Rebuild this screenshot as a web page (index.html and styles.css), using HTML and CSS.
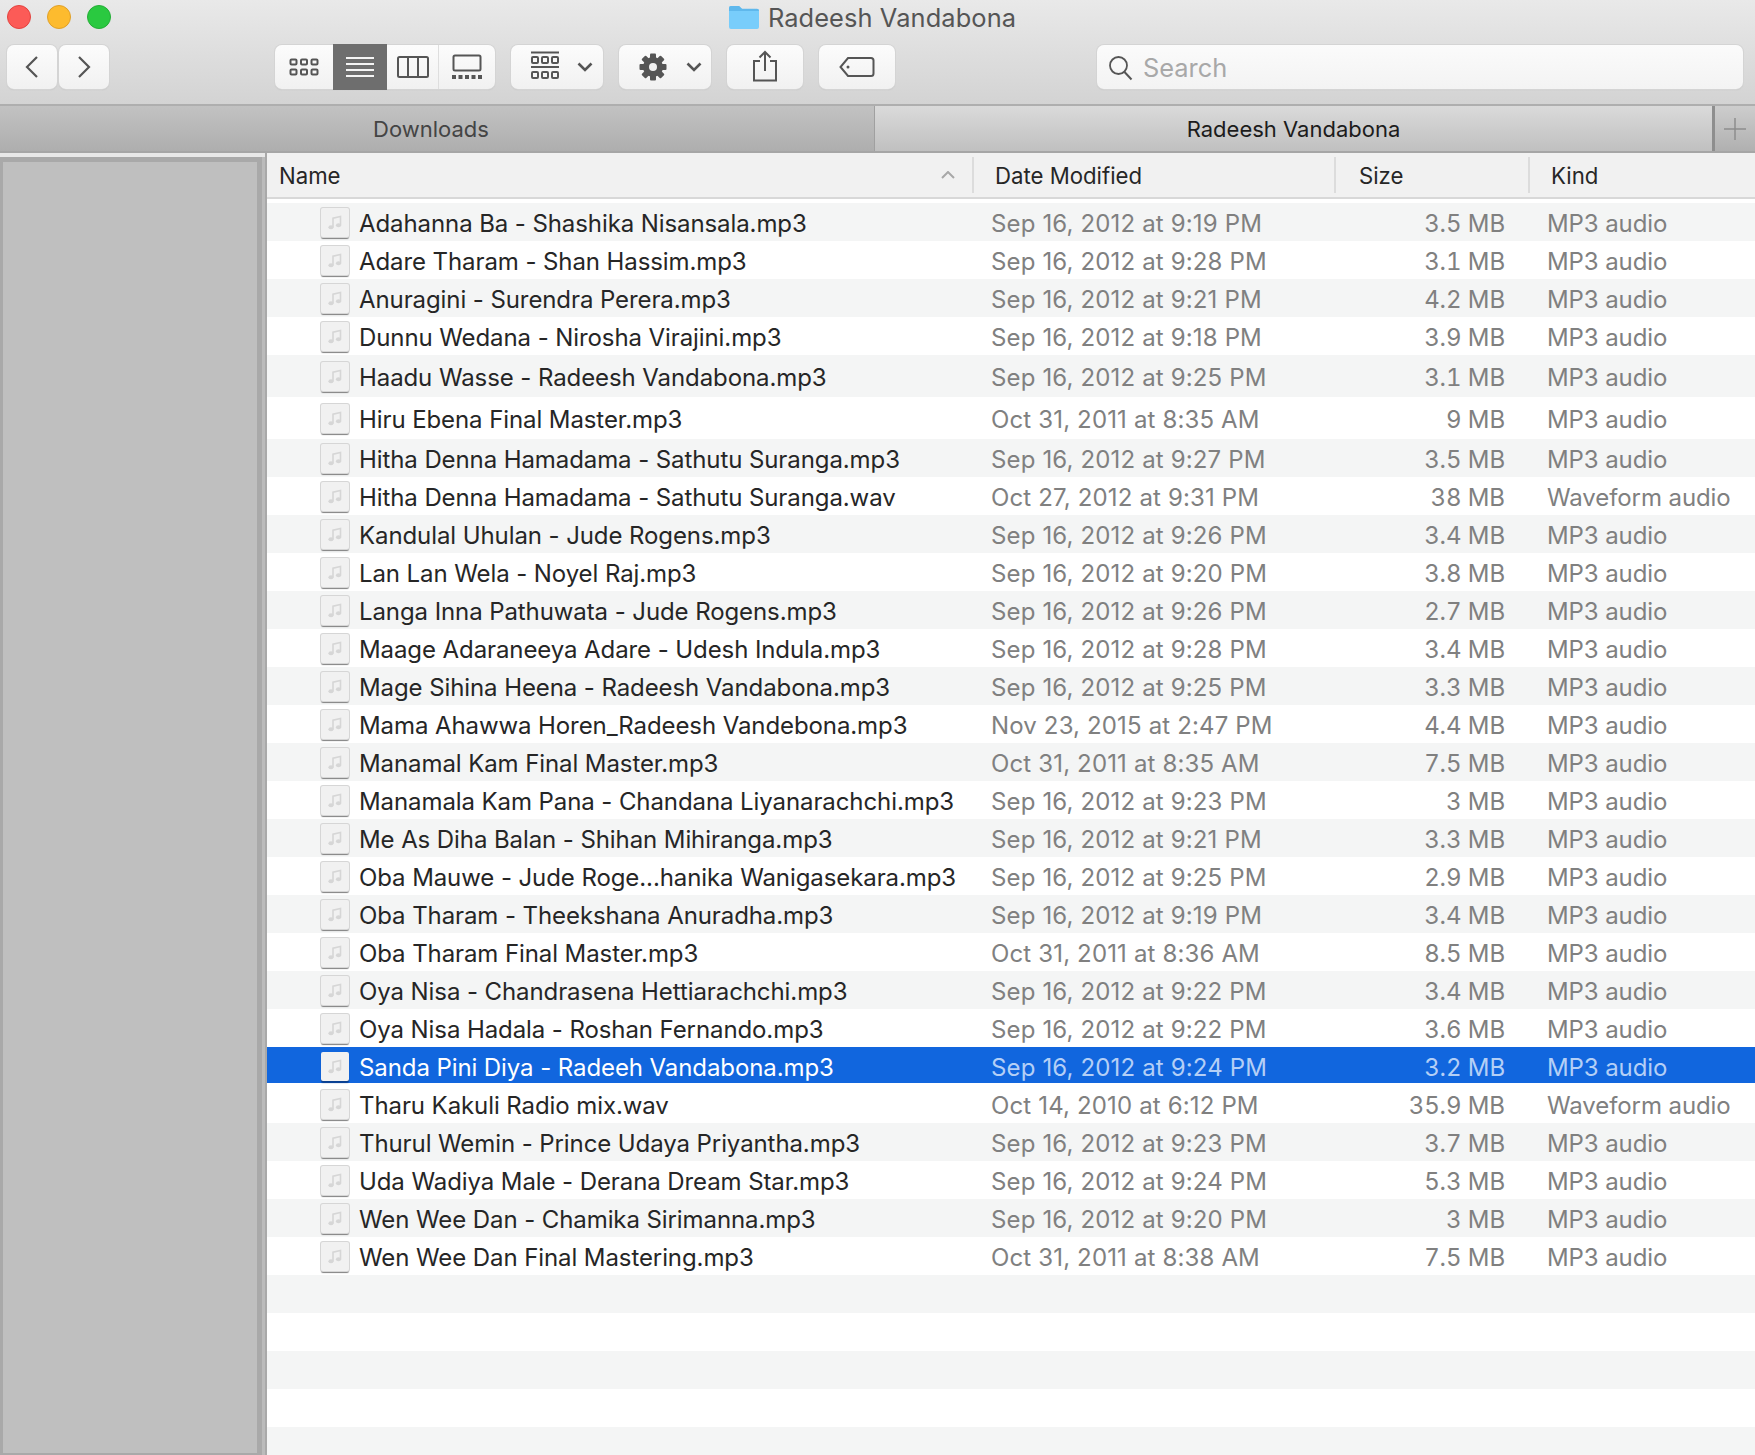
FILE: index.html
```html
<!DOCTYPE html>
<html lang="en">
<head>
<meta charset="utf-8">
<title>Radeesh Vandabona</title>
<link rel="stylesheet" href="styles.css">
</head>
<body>
<svg class="defs" width="0" height="0">
  <symbol id="note" viewBox="0 0 28 28">
    <path d="M12 18.5V9.6l7.5-1.6v8.4" fill="none" stroke="#d6d6d6" stroke-width="1.6"/>
    <ellipse cx="10" cy="18.7" rx="2.6" ry="2" fill="#d6d6d6"/>
    <ellipse cx="17.5" cy="16.8" rx="2.6" ry="2" fill="#d6d6d6"/>
  </symbol>
</svg>
<div class="window">
  <header class="toolbar">
    <div class="titlebar">
      <div class="lights">
        <span class="light red"></span>
        <span class="light yellow"></span>
        <span class="light green"></span>
      </div>
      <div class="title">
        <svg class="folder" viewBox="0 0 30 24" width="30" height="24"><path d="M0 3a2 2 0 0 1 2-2h8l3 3h15a2 2 0 0 1 2 2v16a2 2 0 0 1-2 2H2a2 2 0 0 1-2-2z" fill="#78cdfb"/><path d="M0 6h30v-.2a2 2 0 0 0-2-2H13L10 1H2a2 2 0 0 0-2 2z" fill="#5fb8ec"/></svg>
        <span>Radeesh Vandabona</span>
      </div>
    </div>
    <div class="tools">
      <div class="nav">
        <button class="btn nav-btn"><svg viewBox="0 0 20 30" width="20" height="30"><path d="M15 5L5 15l10 10" class="ic"/></svg></button>
        <button class="btn nav-btn"><svg viewBox="0 0 20 30" width="20" height="30"><path d="M5 5l10 10L5 25" class="ic"/></svg></button>
      </div>
      <div class="btn views">
        <span class="view v-icon"><svg viewBox="0 0 30 24" width="30" height="24"><g class="ico"><rect x="1.5" y="4.5" width="6" height="5" rx="1"/><rect x="12" y="4.5" width="6" height="5" rx="1"/><rect x="22.500" y="4.500" width="6" height="5" rx="1"/><rect x="1.500" y="14.500" width="6" height="5" rx="1"/><rect x="12" y="14.500" width="6" height="5" rx="1"/><rect x="22.500" y="14.500" width="6" height="5" rx="1"/></g></svg></span>
        <span class="view v-list"><svg viewBox="0 0 30 24" width="30" height="24"><path d="M1 3h28M1 9h28M1 15h28M1 21h28" stroke="#f4f4f4" stroke-width="2"/></svg></span>
        <span class="view v-col"><svg viewBox="0 0 32 24" width="32" height="24"><g class="ico"><rect x="1" y="2" width="30" height="20" rx="1.500"/><path d="M11 2v20M21 2v20"/></g></svg></span>
        <span class="view v-gal"><svg viewBox="0 0 30 26" width="30" height="26"><g class="ico"><rect x="1.500" y="1.500" width="27" height="15" rx="1.500"/></g><path d="M0 23h30" stroke="#555" stroke-width="4" stroke-dasharray="4 2.500"/></svg></span>
      </div>
      <button class="btn arrange"><svg viewBox="0 0 30 32" width="30" height="32"><path d="M0 1.500h28M0 16h28" stroke="#555" stroke-width="2"/><g class="ico"><rect x="1" y="6" width="6" height="6" rx="1"/><rect x="11" y="6" width="6" height="6" rx="1"/><rect x="21" y="6" width="6" height="6" rx="1"/><rect x="1" y="21" width="6" height="6" rx="1"/><rect x="11" y="21" width="6" height="6" rx="1"/><rect x="21" y="21" width="6" height="6" rx="1"/></g></svg><svg class="chev" viewBox="0 0 16 10" width="16" height="10"><path d="M1.500 1.500L8 8l6.500-6.500" class="ic2"/></svg></button>
      <button class="btn action"><svg viewBox="0 0 28 28" width="28" height="28"><g fill="#555"><circle cx="14" cy="14" r="10"/><rect x="11" y="0.500" width="6" height="27" rx="1"/><rect x="11" y="0.500" width="6" height="27" rx="1" transform="rotate(45 14 14)"/><rect x="11" y="0.500" width="6" height="27" rx="1" transform="rotate(90 14 14)"/><rect x="11" y="0.500" width="6" height="27" rx="1" transform="rotate(135 14 14)"/></g><circle cx="14" cy="14" r="4" fill="#f2f2f2"/></svg><svg class="chev" viewBox="0 0 16 10" width="16" height="10"><path d="M1.500 1.500L8 8l6.500-6.500" class="ic2"/></svg></button>
      <button class="btn share"><svg viewBox="0 0 26 32" width="26" height="32"><path d="M8 11H2v19.500h22V11h-6" class="ic3"/><path d="M13 21V2M7.500 7.500L13 2l5.500 5.500" class="ic3"/></svg></button>
      <button class="btn tag"><svg viewBox="0 0 36 22" width="36" height="22"><path d="M9 2h23a2.500 2.500 0 0 1 2.500 2.500v13a2.500 2.500 0 0 1-2.500 2.500H9L1.500 11z" class="ic3"/><circle cx="9" cy="11" r="1.500" fill="#555"/></svg></button>
      <div class="search">
        <svg viewBox="0 0 28 28" width="28" height="28"><circle cx="11.500" cy="11.500" r="8.500" fill="none" stroke="#555" stroke-width="1.800"/><path d="M17.500 18l7 7.500" stroke="#555" stroke-width="2" fill="none"/></svg>
        <span>Search</span>
      </div>
    </div>
  </header>
  <nav class="tabs">
    <div class="tab inactive">Downloads</div>
    <div class="tab active">Radeesh Vandabona</div>
    <div class="tab-add"><svg viewBox="0 0 24 24" width="24" height="24"><path d="M12 1v22M1 12h22" stroke="#8d8d8d" stroke-width="1.500"/></svg></div>
  </nav>
  <main class="content">
    <aside class="sidebar"><div class="side-fill"></div></aside>
    <section class="list">
      <div class="head">
        <div class="hcell c-name">Name<svg viewBox="0 0 14 8" width="14" height="8"><path d="M1 7l6-6 6 6" fill="none" stroke="#a8a8a8" stroke-width="2"/></svg></div>
        <div class="hcell c-date">Date Modified</div>
        <div class="hcell c-size">Size</div>
        <div class="hcell c-kind">Kind</div>
      </div>
      <div class="rows">
        <div class="row"><div class="name"><svg class="file"><use href="#note"/></svg>Adahanna Ba - Shashika Nisansala.mp3</div><div class="date">Sep 16, 2012 at 9:19 PM</div><div class="size">3.5 MB</div><div class="kind">MP3 audio</div></div>
        <div class="row"><div class="name"><svg class="file"><use href="#note"/></svg>Adare Tharam - Shan Hassim.mp3</div><div class="date">Sep 16, 2012 at 9:28 PM</div><div class="size">3.1 MB</div><div class="kind">MP3 audio</div></div>
        <div class="row"><div class="name"><svg class="file"><use href="#note"/></svg>Anuragini - Surendra Perera.mp3</div><div class="date">Sep 16, 2012 at 9:21 PM</div><div class="size">4.2 MB</div><div class="kind">MP3 audio</div></div>
        <div class="row"><div class="name"><svg class="file"><use href="#note"/></svg>Dunnu Wedana - Nirosha Virajini.mp3</div><div class="date">Sep 16, 2012 at 9:18 PM</div><div class="size">3.9 MB</div><div class="kind">MP3 audio</div></div>
        <div class="row tall"><div class="name"><svg class="file"><use href="#note"/></svg>Haadu Wasse - Radeesh Vandabona.mp3</div><div class="date">Sep 16, 2012 at 9:25 PM</div><div class="size">3.1 MB</div><div class="kind">MP3 audio</div></div>
        <div class="row tall"><div class="name"><svg class="file"><use href="#note"/></svg>Hiru Ebena Final Master.mp3</div><div class="date">Oct 31, 2011 at 8:35 AM</div><div class="size">9 MB</div><div class="kind">MP3 audio</div></div>
        <div class="row"><div class="name"><svg class="file"><use href="#note"/></svg>Hitha Denna Hamadama - Sathutu Suranga.mp3</div><div class="date">Sep 16, 2012 at 9:27 PM</div><div class="size">3.5 MB</div><div class="kind">MP3 audio</div></div>
        <div class="row"><div class="name"><svg class="file"><use href="#note"/></svg>Hitha Denna Hamadama - Sathutu Suranga.wav</div><div class="date">Oct 27, 2012 at 9:31 PM</div><div class="size">38 MB</div><div class="kind">Waveform audio</div></div>
        <div class="row"><div class="name"><svg class="file"><use href="#note"/></svg>Kandulal Uhulan - Jude Rogens.mp3</div><div class="date">Sep 16, 2012 at 9:26 PM</div><div class="size">3.4 MB</div><div class="kind">MP3 audio</div></div>
        <div class="row"><div class="name"><svg class="file"><use href="#note"/></svg>Lan Lan Wela - Noyel Raj.mp3</div><div class="date">Sep 16, 2012 at 9:20 PM</div><div class="size">3.8 MB</div><div class="kind">MP3 audio</div></div>
        <div class="row"><div class="name"><svg class="file"><use href="#note"/></svg>Langa Inna Pathuwata - Jude Rogens.mp3</div><div class="date">Sep 16, 2012 at 9:26 PM</div><div class="size">2.7 MB</div><div class="kind">MP3 audio</div></div>
        <div class="row"><div class="name"><svg class="file"><use href="#note"/></svg>Maage Adaraneeya Adare - Udesh Indula.mp3</div><div class="date">Sep 16, 2012 at 9:28 PM</div><div class="size">3.4 MB</div><div class="kind">MP3 audio</div></div>
        <div class="row"><div class="name"><svg class="file"><use href="#note"/></svg>Mage Sihina Heena - Radeesh Vandabona.mp3</div><div class="date">Sep 16, 2012 at 9:25 PM</div><div class="size">3.3 MB</div><div class="kind">MP3 audio</div></div>
        <div class="row"><div class="name"><svg class="file"><use href="#note"/></svg>Mama Ahawwa Horen_Radeesh Vandebona.mp3</div><div class="date">Nov 23, 2015 at 2:47 PM</div><div class="size">4.4 MB</div><div class="kind">MP3 audio</div></div>
        <div class="row"><div class="name"><svg class="file"><use href="#note"/></svg>Manamal Kam Final Master.mp3</div><div class="date">Oct 31, 2011 at 8:35 AM</div><div class="size">7.5 MB</div><div class="kind">MP3 audio</div></div>
        <div class="row"><div class="name"><svg class="file"><use href="#note"/></svg>Manamala Kam Pana - Chandana Liyanarachchi.mp3</div><div class="date">Sep 16, 2012 at 9:23 PM</div><div class="size">3 MB</div><div class="kind">MP3 audio</div></div>
        <div class="row"><div class="name"><svg class="file"><use href="#note"/></svg>Me As Diha Balan - Shihan Mihiranga.mp3</div><div class="date">Sep 16, 2012 at 9:21 PM</div><div class="size">3.3 MB</div><div class="kind">MP3 audio</div></div>
        <div class="row"><div class="name"><svg class="file"><use href="#note"/></svg>Oba Mauwe - Jude Roge...hanika Wanigasekara.mp3</div><div class="date">Sep 16, 2012 at 9:25 PM</div><div class="size">2.9 MB</div><div class="kind">MP3 audio</div></div>
        <div class="row"><div class="name"><svg class="file"><use href="#note"/></svg>Oba Tharam - Theekshana Anuradha.mp3</div><div class="date">Sep 16, 2012 at 9:19 PM</div><div class="size">3.4 MB</div><div class="kind">MP3 audio</div></div>
        <div class="row"><div class="name"><svg class="file"><use href="#note"/></svg>Oba Tharam Final Master.mp3</div><div class="date">Oct 31, 2011 at 8:36 AM</div><div class="size">8.5 MB</div><div class="kind">MP3 audio</div></div>
        <div class="row"><div class="name"><svg class="file"><use href="#note"/></svg>Oya Nisa - Chandrasena Hettiarachchi.mp3</div><div class="date">Sep 16, 2012 at 9:22 PM</div><div class="size">3.4 MB</div><div class="kind">MP3 audio</div></div>
        <div class="row"><div class="name"><svg class="file"><use href="#note"/></svg>Oya Nisa Hadala - Roshan Fernando.mp3</div><div class="date">Sep 16, 2012 at 9:22 PM</div><div class="size">3.6 MB</div><div class="kind">MP3 audio</div></div>
        <div class="row selected"><div class="name"><svg class="file"><use href="#note"/></svg>Sanda Pini Diya - Radeeh Vandabona.mp3</div><div class="date">Sep 16, 2012 at 9:24 PM</div><div class="size">3.2 MB</div><div class="kind">MP3 audio</div></div>
        <div class="row"><div class="name"><svg class="file"><use href="#note"/></svg>Tharu Kakuli Radio mix.wav</div><div class="date">Oct 14, 2010 at 6:12 PM</div><div class="size">35.9 MB</div><div class="kind">Waveform audio</div></div>
        <div class="row"><div class="name"><svg class="file"><use href="#note"/></svg>Thurul Wemin - Prince Udaya Priyantha.mp3</div><div class="date">Sep 16, 2012 at 9:23 PM</div><div class="size">3.7 MB</div><div class="kind">MP3 audio</div></div>
        <div class="row"><div class="name"><svg class="file"><use href="#note"/></svg>Uda Wadiya Male - Derana Dream Star.mp3</div><div class="date">Sep 16, 2012 at 9:24 PM</div><div class="size">5.3 MB</div><div class="kind">MP3 audio</div></div>
        <div class="row"><div class="name"><svg class="file"><use href="#note"/></svg>Wen Wee Dan - Chamika Sirimanna.mp3</div><div class="date">Sep 16, 2012 at 9:20 PM</div><div class="size">3 MB</div><div class="kind">MP3 audio</div></div>
        <div class="row"><div class="name"><svg class="file"><use href="#note"/></svg>Wen Wee Dan Final Mastering.mp3</div><div class="date">Oct 31, 2011 at 8:38 AM</div><div class="size">7.5 MB</div><div class="kind">MP3 audio</div></div>
        <div class="row"></div>
        <div class="row"></div>
        <div class="row"></div>
        <div class="row"></div>
        <div class="row"></div>
      </div>
    </section>
  </main>
</div>
</body>
</html>
```

FILE: styles.css
```css
* { box-sizing: border-box; }
html, body { margin: 0; padding: 0; height: 100%; overflow: hidden; }
body { font-family: Inter, "Noto Sans", "Liberation Sans", sans-serif; color: #262626; background: #fff; }
.defs { position: absolute; }
.window { display: flex; flex-direction: column; height: 1455px; width: 1755px; overflow: hidden; }

.toolbar { height: 104px; flex: none; background: linear-gradient(#e9e9e9, #d3d3d3); }
.titlebar { height: 45px; display: grid; grid-template-columns: 1fr auto 1fr; padding-right: 10px; }
.lights { display: flex; gap: 16px; padding: 5px 0 0 7px; }
.light { width: 24px; height: 24px; border-radius: 50%; }
.red { background: #fc5b57; border: 1px solid #e3433f; }
.yellow { background: #fdbb2e; border: 1px solid #e0a028; }
.green { background: #2ac940; border: 1px solid #24ad36; }
.title { display: flex; align-items: flex-start; gap: 9px; padding-top: 5px; font-size: 25.4px; line-height: 26px; color: #555; letter-spacing: 0.1px; }

.tools { display: flex; align-items: flex-start; padding-left: 7px; }
.btn { height: 44px; border: 0; padding: 0; background: linear-gradient(#fcfcfc, #f1f1f1); border-radius: 7px; box-shadow: 0 0 0 1px #d4d4d4, 0 1px 1px #b3b3b3; display: flex; align-items: center; justify-content: center; }
.nav { display: flex; gap: 2px; }
.nav-btn { width: 50px; }
.ic { fill: none; stroke: #555; stroke-width: 2.2; }
.ic2 { fill: none; stroke: #555; stroke-width: 2.6; }
.ic3 { fill: none; stroke: #555; stroke-width: 2; }
.ico { fill: none; stroke: #555; stroke-width: 2; }
.views { width: 220px; margin-left: 166px; justify-content: flex-start; }
.view { height: 44px; display: flex; align-items: center; justify-content: center; }
.v-icon { width: 58px; }
.v-list { width: 54px; height: 46px; background: #6e6e6e; margin-top: -1px; }
.v-col { width: 52px; border-right: 1px solid #dedede; }
.v-gal { width: 56px; }
.arrange { width: 92px; margin-left: 16px; gap: 16px; padding-left: 10px; }
.action { width: 92px; margin-left: 16px; gap: 19px; padding-left: 10px; }
.share { width: 76px; margin-left: 16px; padding-bottom: 3px; }
.tag { width: 76px; margin-left: 16px; }
.search { width: 646px; height: 44px; margin-left: 202px; border-radius: 7px; background: linear-gradient(#fbfbfb, #f3f3f3); box-shadow: 0 0 0 1px #d4d4d4, 0 1px 1px #b3b3b3; display: flex; align-items: center; gap: 8px; padding-left: 10px; padding-top: 1px; font-size: 25.4px; color: #a8a8a8; }

.tabs { height: 49px; flex: none; display: flex; border-top: 2px solid #aeaeae; border-bottom: 2px solid #a6a6a6; font-size: 22px; }
.tab { display: flex; align-items: center; justify-content: center; padding-top: 1px; }
.inactive { width: 875px; padding-right: 12px; color: #444; background: linear-gradient(#c2c2c2, #aeaeae); border-right: 1px solid #a0a0a0; }
.active { width: 837px; color: #1c1c1c; background: linear-gradient(#dadada, #c0c0c0); }
.tab-add { flex: 1; display: flex; align-items: center; justify-content: center; background: linear-gradient(#cdcdcd, #b0b0b0); border-left: 3px solid #8e8e8e; }

.content { flex: 1; display: flex; min-height: 0; }
.sidebar { width: 267px; flex: none; padding-top: 4px; border-right: 2px solid #a9a9a9; background: linear-gradient(#e8e8e8 4px, #bbb 4px); display: flex; }
.side-fill { width: 262px; background: #bfbfbf; border: solid #a9a9a9; border-width: 5px 5px 2px 3px; }

.list { flex: 1; min-width: 0; display: flex; flex-direction: column; }
.head { height: 46px; flex: none; display: grid; grid-template-columns: 705px 362px 194px 1fr; background: #f1f1f1; border-bottom: 2px solid #d8d8d8; font-size: 22.2px; color: #262626; padding-top: 4px; }
.hcell { display: flex; align-items: center; height: 36px; border-left: 2px solid #dcdcdc; }
.c-name { border-left: 0; padding: 0 17px 0 12px; justify-content: space-between; }
.c-date { padding-left: 21px; }
.c-size { padding-left: 23px; }
.c-kind { padding-left: 21px; }

.rows { flex: 1; padding-top: 4px; font-size: 24px; background: #fff; }
.row { height: 38px; display: grid; grid-template-columns: 705px 362px 194px 1fr; align-items: center; white-space: nowrap; color: #808080; padding-top: 2px; }
.row:nth-child(odd) { background: #f4f5f5; }
.tall { height: 42px; }
.name { display: flex; align-items: center; gap: 10px; padding-left: 54px; color: #262626; letter-spacing: -0.09px; }
.date { padding-left: 19px; letter-spacing: 0.15px; }
.size { text-align: right; padding-right: 23px; font-variant-numeric: tabular-nums; letter-spacing: -0.09px; }
.kind { padding-left: 19px; letter-spacing: -0.09px; }
.file { width: 28px; height: 29px; flex: none; margin-top: -2px; background: #f1f1f1; border-radius: 2px; box-shadow: 0 0 0 1px #d6d6d6, 0 1.5px 1px #808080; }
.row.selected { background: linear-gradient(#1166de 36px, #fff 36px); color: #b4cff6; }
.selected .name { color: #fff; }
.selected .file { box-shadow: 0 1.5px 1px #0a3f8f; }
```
